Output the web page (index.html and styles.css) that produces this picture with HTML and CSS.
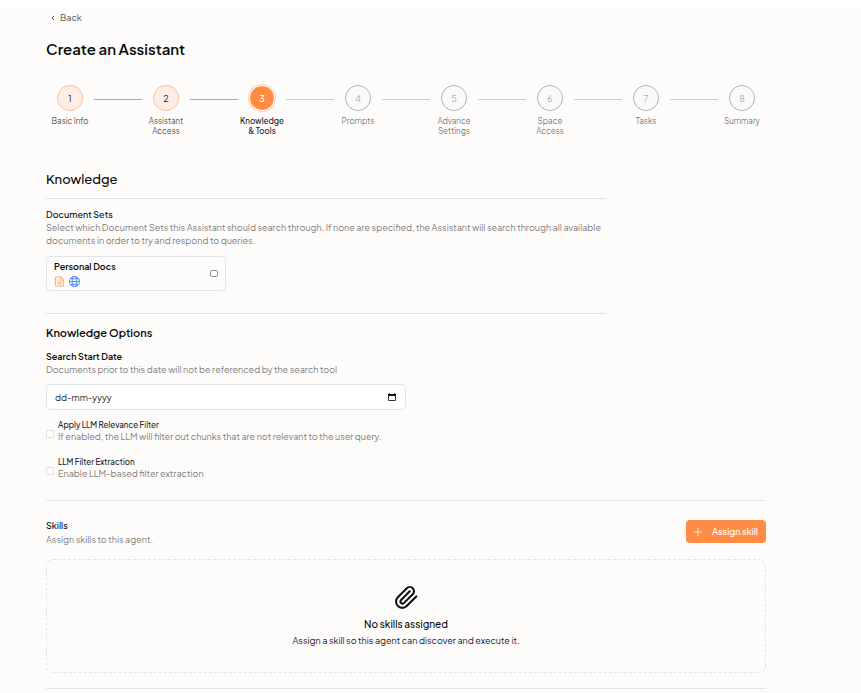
FILE: index.html
```html
<!DOCTYPE html>
<html lang="en">
<head>
<meta charset="utf-8">
<meta name="viewport" content="width=device-width, initial-scale=1">
<title>Create an Assistant</title>
<link rel="stylesheet" href="styles.css">
</head>
<body>
<main class="page">
  <div class="content">
    <a class="back" href="#">
      <svg class="back-icon" viewBox="0 0 24 24" aria-hidden="true"><path d="M16 20l-8-8 8-8"/></svg>
      Back
    </a>
    <h1 class="title">Create an Assistant</h1>

    <ol class="steps">
      <li class="step done"><span class="dot">1</span><span class="step-name">Basic Info</span></li>
      <li class="line line-done"></li>
      <li class="step done"><span class="dot">2</span><span class="step-name">Assistant Access</span></li>
      <li class="line line-done"></li>
      <li class="step current" aria-current="step"><span class="dot">3</span><span class="step-name">Knowledge &amp; Tools</span></li>
      <li class="line"></li>
      <li class="step"><span class="dot">4</span><span class="step-name">Prompts</span></li>
      <li class="line"></li>
      <li class="step"><span class="dot">5</span><span class="step-name">Advance Settings</span></li>
      <li class="line"></li>
      <li class="step"><span class="dot">6</span><span class="step-name">Space Access</span></li>
      <li class="line"></li>
      <li class="step"><span class="dot">7</span><span class="step-name">Tasks</span></li>
      <li class="line"></li>
      <li class="step"><span class="dot">8</span><span class="step-name">Summary</span></li>
    </ol>

    <form class="form">
      <section class="knowledge">
        <h2 class="heading">Knowledge</h2>
        <div class="doc-sets">
          <h3 class="label">Document Sets</h3>
          <p class="hint">Select which Document Sets this Assistant should search through. If none are specified, the Assistant will search through all available documents in order to try and respond to queries.</p>
          <label class="doc-card" for="personal-docs">
            <span class="doc-info">
              <span class="doc-name">Personal Docs</span>
              <span class="doc-icons">
                <svg class="icon file" viewBox="0 0 24 24" aria-hidden="true"><path d="M4 2h11l6 6v14H4a1 1 0 0 1-1-1V3a1 1 0 0 1 1-1zM14 2v7h7M7 9h3M7 13h10M7 17h10"/></svg>
                <svg class="icon globe" viewBox="0 0 24 24" aria-hidden="true"><circle cx="12" cy="12" r="11"/><ellipse cx="12" cy="12" rx="5" ry="11"/><path d="M1 12h22M3 6h18M3 18h18"/></svg>
              </span>
            </span>
            <input class="check rounded" type="checkbox" id="personal-docs">
          </label>
        </div>
      </section>

      <section class="options">
        <h2 class="subheading">Knowledge Options</h2>
        <label class="label strong" for="start-date">Search Start Date</label>
        <p class="hint">Documents prior to this date will not be referenced by the search tool</p>
        <div class="date-field">
          <input class="date-input" type="text" id="start-date" placeholder="dd-mm-yyyy">
          <button class="date-button" type="button" aria-label="Open calendar">
            <svg class="calendar" viewBox="0 0 8 8" aria-hidden="true"><path d="M.5 1.500h7v6h-7z"/><path class="solid" d="M0 1h8v2H0zM1 0h1v1H1zM6 0h1v1H6z"/></svg>
          </button>
        </div>
        <div class="option">
          <input class="check" type="checkbox" id="relevance">
          <label class="option-text" for="relevance"><span class="option-name">Apply LLM Relevance Filter</span><span class="option-hint">If enabled, the LLM will filter out chunks that are not relevant to the user query.</span></label>
        </div>
        <div class="option">
          <input class="check" type="checkbox" id="extraction">
          <label class="option-text" for="extraction"><span class="option-name">LLM Filter Extraction</span><span class="option-hint">Enable LLM-based filter extraction</span></label>
        </div>
      </section>

      <section class="skills">
        <div class="skills-head">
          <div class="skills-intro">
            <h3 class="label">Skills</h3>
            <p class="hint">Assign skills to this agent.</p>
          </div>
          <button class="assign" type="button">
            <svg class="plus" viewBox="0 0 8 8" aria-hidden="true"><path d="M4 0v8M0 4h8"/></svg>
            Assign skill
          </button>
        </div>
        <div class="empty">
          <svg class="clip" viewBox="0 0 24 24" aria-hidden="true"><path d="M21.400 11l-9.200 9.200a6 6 0 0 1-8.500-8.500l8.600-8.600a4 4 0 1 1 5.700 5.700l-8.600 8.600a2 2 0 0 1-2.800-2.800l8.500-8.500"/></svg>
          <p class="empty-title">No skills assigned</p>
          <p class="empty-text">Assign a skill so this agent can discover and execute it.</p>
        </div>
      </section>
      <hr class="rule">
    </form>
  </div>
</main>
</body>
</html>
```
FILE: styles.css
```css
* {
  box-sizing: border-box;
}

body {
  margin: 0;
  padding-top: 9px;
  background: #fff;
  color: #0a0a0a;
  font-family: "Plus Jakarta Sans", Inter, sans-serif;
  font-size: 9px;
  line-height: 13px;
}

h1, h2, h3, p, ol {
  margin: 0;
  padding: 0;
}

input, button {
  margin: 0;
  font: inherit;
}

.page {
  min-height: calc(100vh - 9px);
  overflow: hidden;
  background: #fdfcfb;
}

.content {
  max-width: 720px;
  margin-left: 46px;
  margin-right: 46px;
}

.back {
  display: flex;
  align-items: center;
  gap: 4px;
  width: max-content;
  padding: 2px 4px;
  color: #555;
  text-decoration: none;
}

.back-icon {
  width: 6px;
  height: 8px;
  fill: none;
  stroke: #555;
  stroke-width: 4;
}

.title {
  margin-top: 13px;
  font-size: 15px;
  font-weight: 600;
  line-height: 20px;
}

.steps {
  display: flex;
  align-items: flex-start;
  margin-top: 26px;
  list-style: none;
}

.step {
  display: flex;
  flex: 1 1 0;
  flex-direction: column;
  align-items: center;
  gap: 5px;
  min-width: 0;
  color: #7c7c7c;
}

.dot {
  display: flex;
  align-items: center;
  justify-content: center;
  width: 26px;
  height: 26px;
  border: 1px solid #b5b4b2;
  border-radius: 50%;
  background: #faf9f7;
  color: #b0b0b0;
}

.step-name {
  font-size: 8px;
  line-height: 10px;
  text-align: center;
}

.line {
  flex: 1 1 0;
  height: 1px;
  margin-top: 14px;
  background: #cfcecd;
}

.line-done {
  background: #ff8f4a;
}

.done {
  color: #555;
}

.done .dot {
  border-color: #ffbc94;
  background: #ffeee6;
  color: #1e2340;
}

.current {
  color: #1a1a2c;
  font-weight: 500;
}

.current .dot {
  border-color: #fff;
  background: #ff8c42;
  box-shadow: 0 0 0 1px #ffd3b9;
  color: #fff;
}

.form {
  padding-top: 33px;
}

.knowledge,
.options {
  max-width: 560px;
}

.heading {
  padding-bottom: 9px;
  border-bottom: 1px solid #e5e4e3;
  font-size: 13px;
  font-weight: 500;
  line-height: 20px;
}

.doc-sets {
  padding: 10px 0 22px;
  border-bottom: 1px solid #e5e4e3;
}

.label {
  display: block;
  font-size: 9px;
  font-weight: 500;
  line-height: 12px;
}

.strong {
  font-weight: 600;
}

.hint {
  color: #7d7d7d;
}

.doc-card {
  display: flex;
  align-items: center;
  justify-content: space-between;
  max-width: 180px;
  margin-top: 9px;
  padding: 3px 7px;
  border: 1px solid #e3e5ea;
  border-radius: 4px;
}

.doc-info {
  display: flex;
  flex-direction: column;
  gap: 3px;
}

.doc-name {
  font-weight: 600;
}

.doc-icons {
  display: flex;
  gap: 4px;
}

.icon {
  width: 11px;
  height: 11px;
  fill: none;
  stroke-width: 2;
}

.file {
  stroke: #ffa266;
}

.globe {
  stroke: #4c86ee;
}

.check {
  flex: none;
  appearance: none;
  width: 8px;
  height: 8px;
  border: 1px solid #dfe1e5;
  border-radius: 1px;
  background: #fff;
}

.rounded {
  height: 7px;
  border-color: #8f8f8f;
  border-radius: 2px;
}

.options {
  padding-top: 9px;
}

.subheading {
  margin-bottom: 8px;
  font-size: 11px;
  font-weight: 600;
  line-height: 20px;
}

.date-field {
  display: flex;
  align-items: center;
  max-width: 360px;
  margin-top: 8px;
  border: 1px solid #e3e5e9;
  border-radius: 4px;
  background: #fff;
}

.date-input {
  flex: 1;
  min-width: 0;
  height: 24px;
  padding: 0 8px;
  border: 0;
  background: transparent;
}

.date-input::placeholder {
  color: #222;
  opacity: 1;
}

.date-button {
  display: flex;
  padding: 4px 9px;
  border: 0;
  background: transparent;
}

.calendar {
  width: 8px;
  height: 8px;
  fill: none;
  stroke: #333;
  stroke-width: 1;
}

.solid {
  fill: #111;
  stroke: none;
}

.option {
  display: flex;
  align-items: flex-end;
  gap: 4px;
  margin-top: 10px;
}

.option .check {
  margin-bottom: 4px;
}

.option + .option {
  margin-top: 15px;
}

.option-text {
  display: flex;
  flex-direction: column;
}

.option-name {
  color: #222;
  font-size: 8px;
  font-weight: 500;
  line-height: 11px;
}

.option-hint {
  color: #7d7d7d;
  line-height: 11px;
}

.skills {
  margin-top: 21px;
  padding: 19px 0 15px;
  border-top: 1px solid #e5e4e3;
}

.skills-head {
  display: flex;
  align-items: flex-start;
  justify-content: space-between;
}

.skills-intro {
  display: grid;
  gap: 1px;
}

.assign {
  display: flex;
  align-items: center;
  gap: 10px;
  padding: 5px 8px;
  border: 0;
  border-radius: 4px;
  background: #ff8c42;
  color: #fff;
  font-weight: 500;
}

.plus {
  width: 8px;
  height: 8px;
  fill: none;
  stroke: #ffe3d1;
  stroke-width: 1;
}

.empty {
  display: flex;
  flex-direction: column;
  align-items: center;
  margin-top: 13px;
  padding: 25px 16px;
  border: 1px dashed #e5e4e3;
  border-radius: 7px;
  text-align: center;
}

.clip {
  width: 25px;
  height: 25px;
  fill: none;
  stroke: #111;
  stroke-width: 2;
  stroke-linecap: round;
  stroke-linejoin: round;
}

.empty-title {
  margin-top: 6px;
  font-size: 10px;
  font-weight: 500;
  line-height: 16px;
}

.empty-text {
  margin-top: 2px;
  color: #222;
}

.rule {
  height: 1px;
  margin: 0;
  border: 0;
  background: #e5e4e3;
}
```
